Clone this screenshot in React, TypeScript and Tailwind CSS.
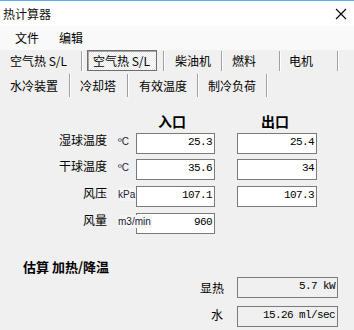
import React from "react";

const cjk = { fontFamily: '"Noto Sans CJK SC", "Noto Sans", sans-serif' };
const mono = { fontFamily: '"Liberation Mono", "DejaVu Sans Mono", monospace' };
const sans = { fontFamily: '"Liberation Sans", Arial, sans-serif' };

function Tab({ w, pl, children }: { w: number; pl: number; children: React.ReactNode }) {
  return (
    <div
      className="h-full flex items-center border-r border-[#a0a0a0] shadow-[1px_0_0_#ffffff] shrink-0"
      style={{ width: w, paddingLeft: pl }}
    >
      {children}
    </div>
  );
}

function ValueBox({ w, value, ro }: { w: number; value: string; ro?: boolean }) {
  return (
    <div
      className={`h-[21px] border border-[#7a7a7a] flex items-center justify-end pr-[2px] pb-[2px] text-[11px] tracking-[-0.6px] text-black shrink-0 ${
        ro ? "bg-[#f0f0f0]" : "bg-white"
      }`}
      style={{ width: w, ...mono }}
    >
      {value}
    </div>
  );
}

function Row({
  label,
  unit,
  unitBg,
  inVal,
  outVal,
  mt,
}: {
  label: string;
  unit: string;
  unitBg?: boolean;
  inVal: string;
  outVal?: string;
  mt: number;
}) {
  return (
    <div className="flex items-start h-[21px]" style={{ marginTop: mt }}>
      <div className="w-[107px] text-right text-[12px] leading-[14px] text-black" style={cjk}>
        {label}
      </div>
      <div className="w-[29px] pl-[10px] pt-[2px] flex items-start whitespace-nowrap relative z-10 text-[10px] leading-[12px]">
        <span
          className={`text-[10px] leading-[13px] text-[#1c1c3a] px-[1px] ${unitBg ? "bg-[#f5f5f5]" : ""}`}
          style={sans}
        >
          {unit}
        </span>
      </div>
      <ValueBox w={79} value={inVal} />
      {outVal !== undefined && (
        <div className="ml-[22px]">
          <ValueBox w={80} value={outVal} />
        </div>
      )}
    </div>
  );
}

export default function App() {
  return (
    <div className="w-[354px] h-[330px] overflow-hidden bg-[#f0f0f0] flex flex-col" style={cjk}>
      {/* Title bar */}
      <div className="h-[26px] bg-white border-t border-[#5aaee6] flex items-center justify-between pl-[3px] pr-[7px] shrink-0">
        <span className="text-[12px] leading-[14px] text-[#111]">热计算器</span>
        <svg width="12" height="12" viewBox="0 0 12 12">
          <path d="M1 1 L11 11 M11 1 L1 11" stroke="#000" strokeWidth="1.1" fill="none" />
        </svg>
      </div>
      {/* Menu bar */}
      <div className="h-[24px] bg-[#f9f9f9] flex items-center text-[12px] text-black shrink-0">
        <span className="ml-[15px]">文件</span>
        <span className="ml-[20px]">编辑</span>
      </div>
      {/* Tabs row 1 */}
      <div className="h-[22px] flex items-stretch text-[12px] text-black shrink-0 py-[1px]">
        <Tab w={82} pl={10}>空气热 S/L</Tab>
        <div
          className="h-full flex items-center border-r border-[#a0a0a0] shadow-[1px_0_0_#ffffff] shrink-0 pl-[5px]"
          style={{ width: 82 }}
        >
          <div className="w-[70px] h-[21px] -mt-[1px] border border-[#6e6e6e] shadow-[inset_1px_1px_0_#a8a8a8] bg-[repeating-conic-gradient(#ffffff_0_25%,#e8e8e8_0_50%)] bg-[length:2px_2px] flex items-center pl-[5px]">
            空气热 S/L
          </div>
        </div>
        <Tab w={58} pl={11}>柴油机</Tab>
        <Tab w={58} pl={10}>燃料</Tab>
        <Tab w={58} pl={9}>电机</Tab>
      </div>
      {/* Tabs row 2 */}
      <div className="h-[23px] mt-[2px] flex items-stretch text-[12px] text-black shrink-0">
        <Tab w={70} pl={10}>水冷装置</Tab>
        <Tab w={58} pl={10}>冷却塔</Tab>
        <Tab w={70} pl={11}>有效温度</Tab>
        <Tab w={69} pl={10}>制冷负荷</Tab>
      </div>

      {/* Header */}
      <div className="flex mt-[16px] text-[14px] leading-[16px] font-bold text-black">
        <span className="ml-[158px]">入口</span>
        <span className="ml-[75px]">出口</span>
      </div>

      <Row label="湿球温度" unit="ºC" inVal="25.3" outVal="25.4" mt={4} />
      <Row label="干球温度" unit="ºC" inVal="35.6" outVal="34" mt={5} />
      <Row label="风压" unit="kPa" unitBg inVal="107.1" outVal="107.3" mt={6} />
      <Row label="风量" unit="m3/min" unitBg inVal="960" mt={6} />

      <div className="mt-[25px] ml-[23px] text-[13px] leading-[16px] font-bold text-black">估算 加热/降温</div>

      <div className="flex items-center mt-[2px]">
        <div className="w-[224px] text-right text-[12px] leading-[14px] text-black">显热</div>
        <div className="ml-[13px]">
          <ValueBox w={101} value="5.7 kW" ro />
        </div>
      </div>
      <div className="flex items-center mt-[8px]">
        <div className="w-[223px] text-right text-[12px] leading-[14px] text-black -mt-[4px]">水</div>
        <div className="ml-[14px]">
          <ValueBox w={101} value="15.26 ml/sec" ro />
        </div>
      </div>
    </div>
  );
}
